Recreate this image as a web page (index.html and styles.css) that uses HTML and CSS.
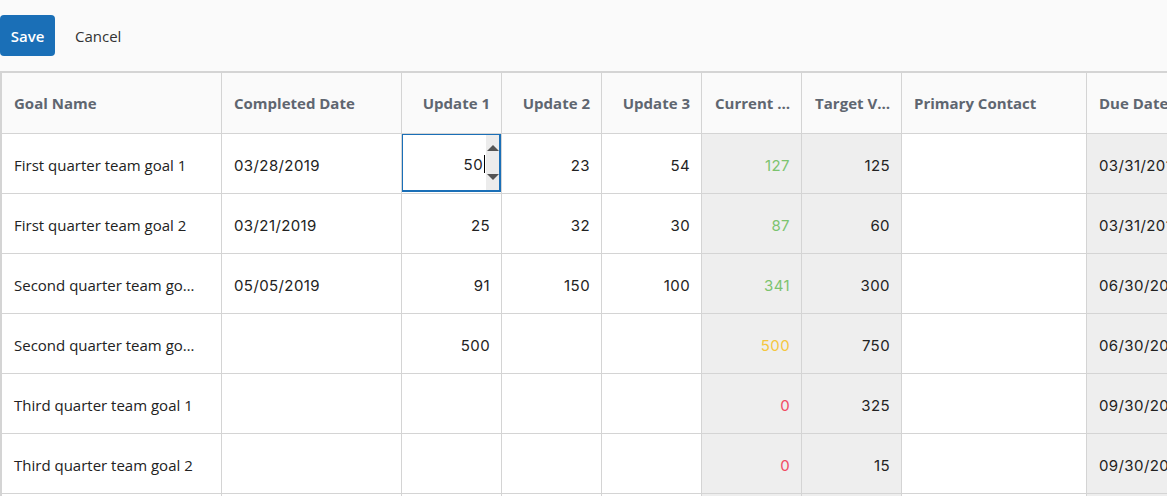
FILE: index.html
```html
<!DOCTYPE html>
<html>
<head>
<meta charset="utf-8">
<link rel="stylesheet" href="styles.css">
</head>
<body>
<div class="toolbar">
  <button class="btn-save">Save</button>
  <button class="btn-cancel">Cancel</button>
</div>
<div class="grid">
  <div class="row head">
    <div class="cell">Goal Name</div>
    <div class="cell">Completed Date</div>
    <div class="cell num">Update 1</div>
    <div class="cell num">Update 2</div>
    <div class="cell num">Update 3</div>
    <div class="cell num">Current …</div>
    <div class="cell num">Target V…</div>
    <div class="cell">Primary Contact</div>
    <div class="cell">Due Date</div>
  </div>
  <div class="row">
    <div class="cell txt">First quarter team goal 1</div>
    <div class="cell n">03/28/2019</div>
    <div class="cell edit"><div class="editor"><span class="val">50</span><span class="caret"></span><span class="spin"><i class="up"></i><i class="down"></i></span></div></div>
    <div class="cell n num">23</div>
    <div class="cell n num">54</div>
    <div class="cell n num ro green">127</div>
    <div class="cell n num ro">125</div>
    <div class="cell"></div>
    <div class="cell n ro">03/31/2019</div>
  </div>
  <div class="row">
    <div class="cell txt">First quarter team goal 2</div>
    <div class="cell n">03/21/2019</div>
    <div class="cell n num">25</div>
    <div class="cell n num">32</div>
    <div class="cell n num">30</div>
    <div class="cell n num ro green">87</div>
    <div class="cell n num ro">60</div>
    <div class="cell"></div>
    <div class="cell n ro">03/31/2019</div>
  </div>
  <div class="row">
    <div class="cell txt">Second quarter team go…</div>
    <div class="cell n">05/05/2019</div>
    <div class="cell n num">91</div>
    <div class="cell n num">150</div>
    <div class="cell n num">100</div>
    <div class="cell n num ro green">341</div>
    <div class="cell n num ro">300</div>
    <div class="cell"></div>
    <div class="cell n ro">06/30/2019</div>
  </div>
  <div class="row">
    <div class="cell txt">Second quarter team go…</div>
    <div class="cell n"></div>
    <div class="cell n num">500</div>
    <div class="cell n num"></div>
    <div class="cell n num"></div>
    <div class="cell n num ro yellow">500</div>
    <div class="cell n num ro">750</div>
    <div class="cell"></div>
    <div class="cell n ro">06/30/2019</div>
  </div>
  <div class="row">
    <div class="cell txt">Third quarter team goal 1</div>
    <div class="cell n"></div>
    <div class="cell n num"></div>
    <div class="cell n num"></div>
    <div class="cell n num"></div>
    <div class="cell n num ro red">0</div>
    <div class="cell n num ro">325</div>
    <div class="cell"></div>
    <div class="cell n ro">09/30/2019</div>
  </div>
  <div class="row">
    <div class="cell txt">Third quarter team goal 2</div>
    <div class="cell n"></div>
    <div class="cell n num"></div>
    <div class="cell n num"></div>
    <div class="cell n num"></div>
    <div class="cell n num ro red">0</div>
    <div class="cell n num ro">15</div>
    <div class="cell"></div>
    <div class="cell n ro">09/30/2019</div>
  </div>
  <div class="row">
    <div class="cell txt"></div>
    <div class="cell n"></div>
    <div class="cell n num"></div>
    <div class="cell n num"></div>
    <div class="cell n num"></div>
    <div class="cell n num ro"></div>
    <div class="cell n num ro"></div>
    <div class="cell"></div>
    <div class="cell n ro"></div>
  </div>
</div>
</body>
</html>
```
FILE: styles.css
```css
html, body {
  margin: 0;
  padding: 0;
  background: #fafafa;
  overflow: hidden;
  width: 1167px;
  height: 496px;
}
body {
  font-family: "Open Sans", "Segoe UI", sans-serif;
  color: #222;
}
.toolbar {
  height: 71px;
  display: flex;
  align-items: flex-start;
  padding-top: 15px;
  box-sizing: border-box;
}
.btn-save {
  width: 55px;
  height: 41px;
  border: none;
  border-radius: 4px;
  background: #1a6fb7;
  color: #fff;
  font-family: "Open Sans", sans-serif;
  font-size: 15px;
  font-weight: 600;
  padding: 0;
}
.btn-cancel {
  margin-left: 12px;
  height: 41px;
  border: none;
  background: transparent;
  color: #333;
  font-family: "Open Sans", sans-serif;
  font-size: 15px;
  padding: 0 8px;
}
.grid {
  border-top: 2px solid #d4d4d4;
  border-left: 2px solid #d4d4d4;
  width: 1400px;
}
.row {
  display: grid;
  grid-template-columns: 220px 180px 100px 100px 100px 100px 100px 185px 200px;
  height: 60px;
  background: #fff;
}
.row.head {
  height: 61px;
  background: #fafafa;
}
.cell {
  border-right: 1px solid #d4d4d4;
  border-bottom: 1px solid #d4d4d4;
  display: flex;
  align-items: center;
  padding: 3px 11px 0 12px;
  font-size: 15px;
  white-space: nowrap;
  overflow: hidden;
  min-width: 0;
}
.head .cell {
  font-weight: 700;
  color: #5f6670;
  font-size: 15px;
  padding-top: 0;
}
.num {
  justify-content: flex-end;
}
.n {
  font-family: "Inter", "Open Sans", sans-serif;
  font-size: 15px;
  letter-spacing: 0.4px;
  color: #222;
}
.txt {
  color: #222;
}
.ro {
  background: #eeeeee;
}
.green { color: #7cc36e; }
.yellow { color: #f5c63d; }
.red { color: #f14b63; }
.edit {
  padding: 0;
  position: relative;
}
.editor {
  position: absolute;
  left: -1px;
  top: -1px;
  width: 100px;
  height: 59px;
  border: 2px solid #1a6fb7;
  box-sizing: border-box;
  background: #fff;
  display: flex;
  align-items: center;
  justify-content: flex-end;
  font-family: "Inter", sans-serif;
  font-size: 15px;
  letter-spacing: 0.4px;
  color: #222;
}
.val {
  padding-top: 3px;
}
.caret {
  width: 1px;
  height: 18px;
  background: #000;
  margin-left: 1px;
  margin-top: 3px;
}
.spin {
  width: 13px;
  height: 100%;
  background: #ececec;
  margin-left: 1px;
  display: flex;
  flex-direction: column;
  justify-content: space-between;
  align-items: center;
  padding: 10px 0;
  box-sizing: border-box;
}
.spin i {
  width: 0;
  height: 0;
  border-left: 6px solid transparent;
  border-right: 6px solid transparent;
}
.spin .up { border-bottom: 6px solid #555; }
.spin .down { border-top: 6px solid #555; }
```
